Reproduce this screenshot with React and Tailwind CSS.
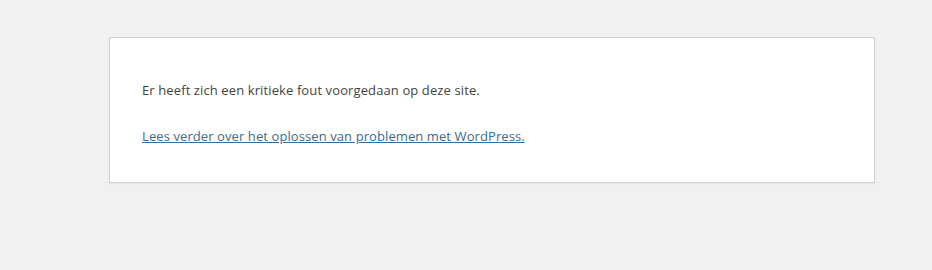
import React from 'react';

export default function App() {
  return (
    <div className="min-h-[270px] w-full bg-[#f1f1f1] pt-[37px] pl-[109px]">
      {/* Error box */}
      <div
        className="w-[766px] border border-[#ccd0d4] bg-white px-[32px] pt-[16px] pb-[15px] text-[#444] shadow-[0_1px_1px_rgba(0,0,0,0.04)]"
        style={{ fontFamily: '"Open Sans", "Noto Sans", sans-serif' }}
      >
        <p className="mt-[26px] mb-[25px] text-[13px] leading-[21px] tracking-[0.11px]">
          Er heeft zich een kritieke fout voorgedaan op deze site.
        </p>
        <p className="mb-[20px] text-[13px] leading-[21px] tracking-[0.09px]">
          <a href="#" className="text-[#2b6fa3] underline">
            Lees verder over het oplossen van problemen met WordPress.
          </a>
        </p>
      </div>
    </div>
  );
}
